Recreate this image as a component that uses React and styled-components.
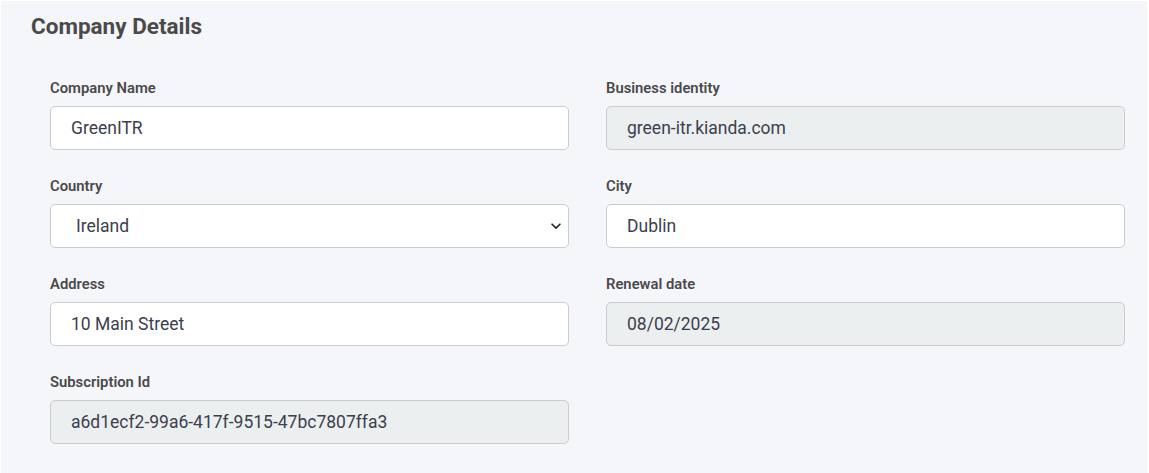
import styled, { createGlobalStyle } from "styled-components";

const GlobalStyle = createGlobalStyle`
  html, body {
    margin: 0;
    padding: 0;
    background: #ffffff;
  }
  body {
    font-family: Roboto, "Liberation Sans", sans-serif;
  }
`;

const Page = styled.div`
  margin: 1px 2px 0 1px;
  min-height: 472px;
  box-sizing: border-box;
  background: #f5f6fa;
  padding: 11px 0 0 30px;
`;

const Title = styled.h2`
  margin: 0;
  font-size: 22.5px;
  font-weight: 700;
  color: #4a4a4a;
  line-height: 28px;
`;

const Grid = styled.div`
  display: grid;
  grid-template-columns: 519px 519px;
  column-gap: 37px;
  row-gap: 26px;
  padding: 38px 0 0 19px;
`;

const Field = styled.div`
  display: flex;
  flex-direction: column;
`;

const Label = styled.label`
  font-size: 14.8px;
  font-weight: 600;
  color: #4a4a4a;
  line-height: 20px;
  margin-bottom: 8px;
`;

const Input = styled.input`
  box-sizing: border-box;
  height: 44px;
  width: 100%;
  padding: 0 20px;
  border: 1px solid #c9ccd1;
  border-radius: 5px;
  font-family: Roboto, "Liberation Sans", sans-serif;
  font-size: 17.5px;
  color: #3c404d;
  background: ${(p) => (p.disabled ? "#eceff0" : "#ffffff")};
  outline: none;
  &:disabled {
    color: #3c404d;
    -webkit-text-fill-color: #3c404d;
    opacity: 1;
  }
`;

const SelectWrap = styled.div`
  position: relative;
`;

const Select = styled.select`
  appearance: none;
  box-sizing: border-box;
  height: 44px;
  width: 100%;
  padding: 0 40px 0 25px;
  border: 1px solid #c9ccd1;
  border-radius: 5px;
  background: #ffffff;
  font-family: Roboto, "Liberation Sans", sans-serif;
  font-size: 17.5px;
  color: #3c404d;
  outline: none;
`;

const Chevron = styled.svg`
  position: absolute;
  right: 6px;
  top: 15px;
  pointer-events: none;
`;

const fields = [
  { label: "Company Name", value: "GreenITR" },
  { label: "Business identity", value: "green-itr.kianda.com", disabled: true },
  { label: "Country", value: "Ireland", select: true },
  { label: "City", value: "Dublin" },
  { label: "Address", value: "10 Main Street" },
  { label: "Renewal date", value: "08/02/2025", disabled: true },
  { label: "Subscription Id", value: "a6d1ecf2-99a6-417f-9515-47bc7807ffa3", disabled: true },
];

export default function App() {
  return (
    <>
      <GlobalStyle />
      <Page>
        <Title>Company Details</Title>
        <Grid>
          {fields.map((f) => (
            <Field key={f.label}>
              <Label>{f.label}</Label>
              {f.select ? (
                <SelectWrap>
                  <Select defaultValue={f.value}>
                    <option>{f.value}</option>
                  </Select>
                  <Chevron width="14" height="14" viewBox="0 0 16 16">
                    <path d="M3.5 6l4.5 4.5L12.5 6" fill="none" stroke="#2a2d36" strokeWidth="2" strokeLinecap="round" strokeLinejoin="round" />
                  </Chevron>
                </SelectWrap>
              ) : (
                <Input defaultValue={f.value} disabled={f.disabled} readOnly />
              )}
            </Field>
          ))}
        </Grid>
      </Page>
    </>
  );
}
